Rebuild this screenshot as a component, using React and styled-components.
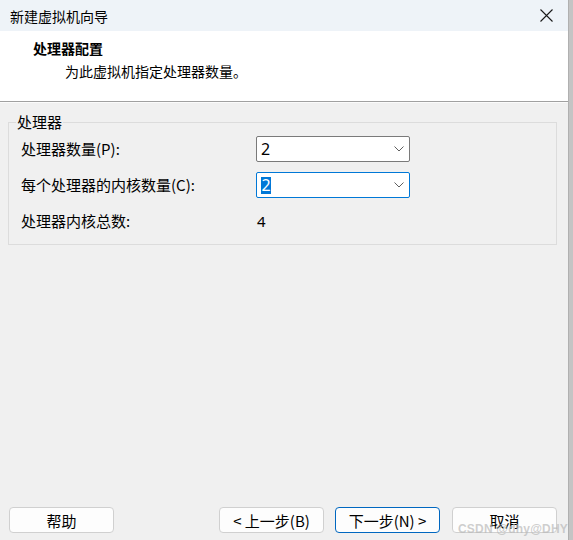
import React from 'react';
import styled, { createGlobalStyle } from 'styled-components';

const GlobalStyle = createGlobalStyle`
	html, body {
		margin: 0;
		padding: 0;
		background: #c4c4c4;
	}
	body {
		font-family: "Noto Sans CJK SC", "Noto Sans", sans-serif;
		color: #000;
	}
`;

const rows = [
	{ label: '处理器数量(P):', value: '2' },
	{ label: '每个处理器的内核数量(C):', value: '2', focused: true },
	{ label: '处理器内核总数:', value: '4', plain: true },
];

function Chevron() {
	return (
		<svg width="10" height="6" viewBox="0 0 10 6">
			<path d="M0.5 0.5 L5 5 L9.5 0.5" fill="none" stroke="#5f5f5f" strokeWidth="1" />
		</svg>
	);
}

function CloseIcon() {
	return (
		<svg width="13" height="13" viewBox="0 0 13 13">
			<path d="M0.5 0.5 L12.5 12.5 M12.5 0.5 L0.5 12.5" stroke="#1a1a1a" strokeWidth="1.1" />
		</svg>
	);
}

export default function App() {
	return (
		<Page>
			<GlobalStyle />
			<Window>
				<TitleBar>
					<span className="__title">新建虚拟机向导</span>
					<CloseIcon />
				</TitleBar>

				<Header>
					<h1>处理器配置</h1>
					<p>为此虚拟机指定处理器数量。</p>
				</Header>

				<Body>
					<Group>
						<legend>处理器</legend>
						<Grid>
							{rows.map((row) => (
								<React.Fragment key={row.label}>
									<Label>{row.label}</Label>
									{row.plain ? (
										<Value>{row.value}</Value>
									) : (
										<Combo $focused={row.focused}>
											{row.focused ? <Selected>{row.value}</Selected> : <span>{row.value}</span>}
											<Chevron />
										</Combo>
									)}
								</React.Fragment>
							))}
						</Grid>
					</Group>
				</Body>

				<Footer>
					<Button>帮助</Button>
					<ButtonGroup>
						<Button>&lt; 上一步(B)</Button>
						<Button $primary>下一步(N) &gt;</Button>
						<Button className="__cancel">取消</Button>
					</ButtonGroup>
				</Footer>

				<Watermark>CSDN @dhy@DHY</Watermark>
			</Window>
			<Strip />
		</Page>
	);
}

const Page = styled.div`
	display: flex;
	width: 573px;
	height: 540px;
`;

const Window = styled.div`
	position: relative;
	flex: 0 0 568px;
	display: flex;
	flex-direction: column;
	background: #f0f0f0;
	overflow: hidden;
`;

const Strip = styled.div`
	flex: 1;
	background: #c4c4c4;
	border-left: 1px solid #b0b0b0;
`;

const TitleBar = styled.div`
	height: 31px;
	flex: 0 0 31px;
	display: flex;
	align-items: center;
	justify-content: space-between;
	padding: 0 15px 0 10px;
	background: #eef3f8;

	.__title {
		font-size: 14px;
		line-height: 20px;
	}
`;

const Header = styled.div`
	height: 71px;
	flex: 0 0 71px;
	background: #fff;
	border-bottom: 1px solid #a0a0a0;
	padding: 7px 0 0 33px;
	box-sizing: border-box;

	h1 {
		margin: 0;
		font-size: 14px;
		line-height: 20px;
		font-weight: 700;
	}

	p {
		margin: 3px 0 0 32px;
		font-size: 14px;
		line-height: 20px;
	}
`;

const Body = styled.div`
	flex: 1;
	padding: 8px 11px 0 8px;
	border-top: 1px solid #fbfbfb;
`;

const Group = styled.fieldset`
	margin: 0;
	padding: 3px 12px 10px 12px;
	border: 1px solid #dcdcdc;

	legend {
		margin-left: -5px;
		padding: 0 1px;
		font-size: 15px;
		line-height: 22px;
	}
`;

const Grid = styled.div`
	display: grid;
	grid-template-columns: 235px 154px;
	grid-auto-rows: 26px;
	row-gap: 10px;
	align-items: center;
`;

const Label = styled.span`
	font-size: 15px;
	line-height: 20px;
`;

const Value = styled.span`
	font-family: "Noto Sans", sans-serif;
	font-size: 15px;
	padding-left: 1px;
`;

const Combo = styled.div`
	height: 26px;
	box-sizing: border-box;
	display: flex;
	align-items: center;
	justify-content: space-between;
	padding: 0 5px 0 4px;
	background: #fff;
	border: 1px solid ${(p) => (p.$focused ? '#0078d7' : '#7a7a7a')};
	border-radius: 2px;
	font-family: "Noto Sans", sans-serif;
	font-size: 16px;
`;

const Selected = styled.span`
	display: inline-block;
	height: 17px;
	line-height: 17px;
	padding: 0 0.5px;
	background: #0078d7;
	color: #fff;
`;

const Footer = styled.div`
	display: flex;
	align-items: center;
	padding: 0 11px 7px 9px;
`;

const ButtonGroup = styled.div`
	display: flex;
	gap: 11px;
	margin-left: auto;

	.__cancel {
		margin-left: 1px;
	}
`;

const Button = styled.button`
	width: 105px;
	height: 26px;
	padding: 0;
	background: #fdfdfd;
	border: 1px solid ${(p) => (p.$primary ? '#0067c0' : '#d0d0d0')};
	border-radius: 4px;
	font-family: "Noto Sans CJK SC", "Noto Sans", sans-serif;
	font-size: 15px;
	color: #000;
`;

const Watermark = styled.span`
	position: absolute;
	right: 0;
	bottom: 4px;
	font-family: "Liberation Sans", sans-serif;
	font-size: 12px;
	font-weight: 700;
	color: rgba(185, 185, 185, 0.7);
	letter-spacing: 0.2px;
	pointer-events: none;
`;
